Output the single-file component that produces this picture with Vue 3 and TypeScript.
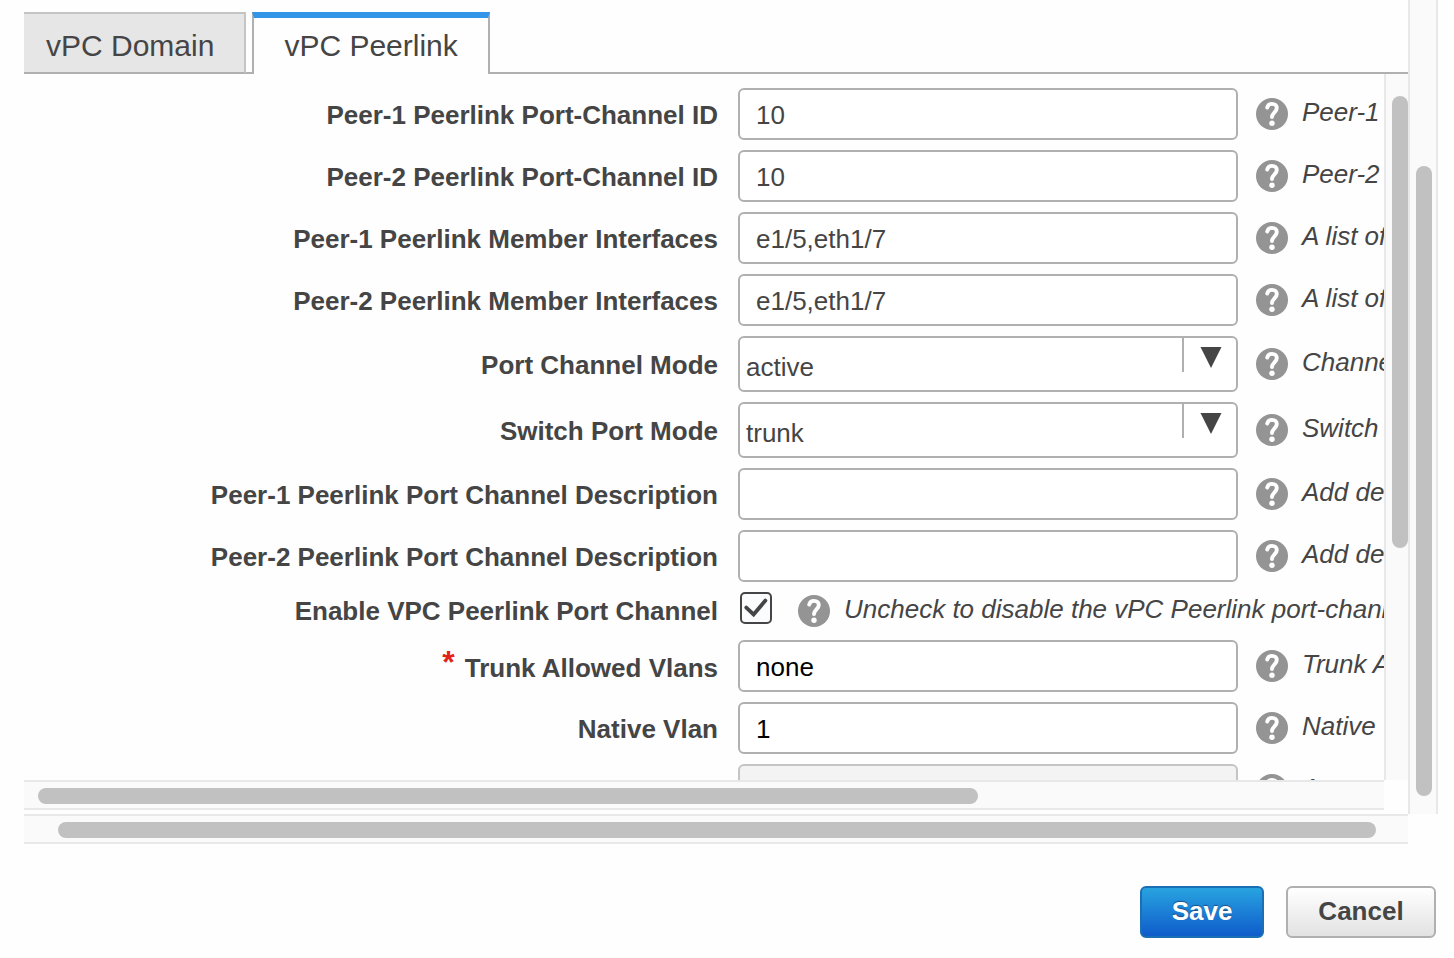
<script setup lang="ts">
import { ref } from 'vue'

type Kind = 'text' | 'select' | 'check'

interface Field {
  id: string
  label: string
  kind: Kind
  value: string
  hint: string
  checked?: boolean
  required?: boolean
  fresh?: boolean
  disabled?: boolean
}

const tabs = ['vPC Domain', 'vPC Peerlink']
const activeTab = ref('vPC Peerlink')

const fields = ref<Field[]>([
  { id: 'peer1-id', label: 'Peer-1 Peerlink Port-Channel ID', kind: 'text', value: '10', hint: 'Peer-1' },
  { id: 'peer2-id', label: 'Peer-2 Peerlink Port-Channel ID', kind: 'text', value: '10', hint: 'Peer-2' },
  { id: 'peer1-members', label: 'Peer-1 Peerlink Member Interfaces', kind: 'text', value: 'e1/5,eth1/7', hint: 'A list of' },
  { id: 'peer2-members', label: 'Peer-2 Peerlink Member Interfaces', kind: 'text', value: 'e1/5,eth1/7', hint: 'A list of' },
  { id: 'channel-mode', label: 'Port Channel Mode', kind: 'select', value: 'active', hint: 'Channel' },
  { id: 'switch-mode', label: 'Switch Port Mode', kind: 'select', value: 'trunk', hint: 'Switch' },
  { id: 'peer1-desc', label: 'Peer-1 Peerlink Port Channel Description', kind: 'text', value: '', hint: 'Add description' },
  { id: 'peer2-desc', label: 'Peer-2 Peerlink Port Channel Description', kind: 'text', value: '', hint: 'Add description' },
  { id: 'enable', label: 'Enable VPC Peerlink Port Channel', kind: 'check', value: '', checked: true, hint: 'Uncheck to disable the vPC Peerlink port-channel' },
  { id: 'trunk-vlans', label: 'Trunk Allowed Vlans', kind: 'text', value: 'none', required: true, fresh: true, hint: 'Trunk Allowed' },
  { id: 'native-vlan', label: 'Native Vlan', kind: 'text', value: '1', fresh: true, hint: 'Native' },
  { id: 'extra', label: '', kind: 'text', value: '', disabled: true, hint: 'A' }
])

// Space before the thumb, thumb length, space after it
type Thumb = [number, number, number]
const innerV: Thumb = [22, 452, 232]
const innerH: Thumb = [14, 940, 406]
const outerV: Thumb = [166, 630, 18]
const outerH: Thumb = [34, 1318, 32]
const split = (t: Thumb) => t.map((n) => `${n}fr`).join(' ')
</script>

<template>
  <div class="dialog">
    <div class="outer">
      <main class="main">
        <div class="tabs" role="tablist">
          <button
            v-for="t in tabs"
            :key="t"
            type="button"
            role="tab"
            class="tab"
            :class="{ active: t === activeTab }"
            :aria-selected="t === activeTab"
            @click="activeTab = t"
          >{{ t }}</button>
        </div>

        <div class="pane">
          <form class="viewport" @submit.prevent>
            <div v-for="f in fields" :key="f.id" class="row" :class="f.kind">
              <label class="label" :for="f.id"><span v-if="f.required" class="star">*</span>{{ f.label }}</label>

              <input
                v-if="f.kind === 'text'"
                :id="f.id"
                v-model="f.value"
                type="text"
                class="box"
                :class="{ fresh: f.fresh }"
                :disabled="f.disabled"
                :aria-describedby="f.id + '-hint'"
              />
              <span v-else-if="f.kind === 'select'" class="pick">
                <select :id="f.id" v-model="f.value" class="box">
                  <option :value="f.value">{{ f.value }}</option>
                </select>
                <span class="arrow">
                  <svg width="22" height="21" viewBox="0 0 22 21" aria-hidden="true"><path d="M0.5 0H21.5L11 21Z" fill="#454545" /></svg>
                </span>
              </span>
              <span v-else class="tick">
                <input :id="f.id" v-model="f.checked" type="checkbox" />
                <svg v-if="f.checked" class="mark" width="32" height="32" viewBox="0 0 32 32" aria-hidden="true">
                  <path d="M6.3 15.6L13.6 22.4L25.4 8.6" fill="none" stroke="#454548" stroke-width="3.8" stroke-linecap="round" />
                </svg>
              </span>

              <svg class="help" width="32" height="32" viewBox="0 0 32 32" aria-hidden="true">
                <circle cx="16" cy="16" r="16" fill="#949494" />
                <path d="M11.2 9.6C11.8 7 13.6 5.9 16 5.9C18.9 5.9 20.8 7.5 20.8 10.1C20.8 14.2 16.1 14.6 16 19" fill="none" stroke="#fff" stroke-width="3.9" stroke-linecap="round" />
                <circle cx="16" cy="25.3" r="2.7" fill="#fff" />
              </svg>
              <span :id="f.id + '-hint'" class="hint">{{ f.hint }}</span>
            </div>
          </form>
          <div class="track vertical inner-v" :style="{ gridTemplateRows: split(innerV) }"><i class="thumb"></i></div>
          <div class="track horizontal" :style="{ gridTemplateColumns: split(innerH) }"><i class="thumb"></i></div>
        </div>
      </main>
      <div class="track vertical" :style="{ gridTemplateRows: split(outerV) }"><i class="thumb"></i></div>
      <div class="track horizontal" :style="{ gridTemplateColumns: split(outerH) }"><i class="thumb"></i></div>
    </div>

    <footer class="actions">
      <button type="button" class="btn save">Save</button>
      <button type="button" class="btn cancel">Cancel</button>
    </footer>
  </div>
</template>

<style>
body {
  margin: 0;
  background: #fefefe;
}
</style>

<style scoped>
.dialog,
.dialog * {
  box-sizing: border-box;
}
.dialog {
  display: flex;
  flex-direction: column;
  height: 100vh;
  overflow: hidden;
  font-family: "Liberation Sans", Arial, sans-serif;
  font-size: 26px;
  line-height: 30px;
  color: #454545;
}
button,
input,
select {
  font: inherit;
  color: inherit;
  margin: 0;
}
.outer {
  flex: 1;
  min-height: 0;
  display: grid;
  grid-template-columns: minmax(0, 1fr) 30px;
  grid-template-rows: minmax(0, 1fr) 30px;
  padding: 0 16px 0 24px;
}
.main {
  display: flex;
  flex-direction: column;
  min-height: 0;
  padding-bottom: 4px;
}
.tabs {
  display: flex;
  gap: 6px;
  padding-top: 12px;
  background: linear-gradient(#b0b0b0, #b0b0b0) bottom / 100% 2px no-repeat;
}
.tab {
  height: 62px;
  padding: 6px 30px 0;
  border: 2px solid #b0b0b0;
  border-top-color: #c4c4c4;
  border-right-color: #c4c4c4;
  background: #e6e6e6;
  font-size: 30px;
  line-height: 36px;
}
.tab:first-child {
  border-left: 0;
  padding-left: 22px;
}
.tab.active {
  border-color: #b0b0b0;
  border-top: 6px solid #3295e8;
  border-bottom: 0;
  padding-top: 0;
  background: #fefefe;
}
.pane {
  flex: 1;
  min-height: 0;
  display: grid;
  grid-template-columns: minmax(0, 1fr) 24px;
  grid-template-rows: minmax(0, 1fr) 30px;
}
.viewport {
  overflow: hidden;
  display: flex;
  flex-direction: column;
  gap: 10px;
  padding-top: 14px;
}
.row {
  flex: none;
  display: grid;
  grid-template-columns: minmax(0, 1fr) 500px 50px 96px;
  align-items: center;
  height: 52px;
}
.row.select {
  height: 56px;
}
.row.check {
  height: 38px;
  grid-template-columns: minmax(0, 1fr) 42px 50px 554px;
}
.label {
  padding: 2px 20px 0 0;
  text-align: right;
  font-weight: bold;
  white-space: nowrap;
}
.check .label {
  padding-top: 0;
}
.star {
  margin-right: 10px;
  color: #e2231a;
  font-size: 32px;
  line-height: 20px;
  vertical-align: 4px;
}
.help {
  display: block;
  margin-left: 18px;
}
.hint {
  padding: 0 0 4px 14px;
  font-style: italic;
  white-space: nowrap;
}
.box {
  display: block;
  width: 100%;
  height: 52px;
  padding: 2px 16px 0;
  border: 2px solid #b0b0b0;
  border-radius: 6px;
  background: #fff;
  outline: none;
}
.box.fresh {
  color: #000;
}
.box:disabled {
  border-color: #c4c4c4;
  background: #f3f3f3;
}
.pick {
  position: relative;
  display: block;
}
select.box {
  height: 56px;
  padding: 6px 60px 0 6px;
  appearance: none;
}
.arrow {
  position: absolute;
  top: 2px;
  right: 2px;
  width: 54px;
  height: 34px;
  padding: 9px 0 0 16px;
  border-left: 2px solid #b0b0b0;
  line-height: 0;
  pointer-events: none;
}
.tick {
  position: relative;
  align-self: start;
  width: 32px;
  height: 32px;
  margin-left: 2px;
}
.tick input {
  display: block;
  width: 32px;
  height: 32px;
  border: 2px solid #454548;
  border-radius: 5px;
  background: #fafcfe;
  appearance: none;
}
.mark {
  position: absolute;
  inset: 0;
  pointer-events: none;
}
.track {
  display: grid;
  background: #fafafa;
}
.thumb {
  border-radius: 8px;
  background: #c1c1c1;
}
.vertical {
  border: solid #e8e8e8;
  border-width: 0 2px;
  padding: 0 4px 0 6px;
}
.vertical .thumb {
  grid-row: 2;
}
.inner-v {
  border-right: 0;
  padding-right: 0;
}
.horizontal {
  border: solid #e8e8e8;
  border-width: 2px 0;
  padding: 6px 0 4px;
}
.horizontal .thumb {
  grid-column: 2;
}
.actions {
  display: flex;
  justify-content: flex-end;
  gap: 22px;
  padding: 42px 18px 20px;
}
.btn {
  height: 52px;
  padding: 0 0 2px;
  border: 2px solid #b0b0b0;
  border-radius: 6px;
  font-weight: bold;
}
.save {
  width: 124px;
  border-color: #1a6fb5;
  background: linear-gradient(#28a3e0, #0f5ccb);
  color: #fff;
  text-shadow: 0 -1px 1px #1c4f86;
}
.cancel {
  width: 150px;
  background: linear-gradient(#ffffff, #e2e2e2);
}
</style>
